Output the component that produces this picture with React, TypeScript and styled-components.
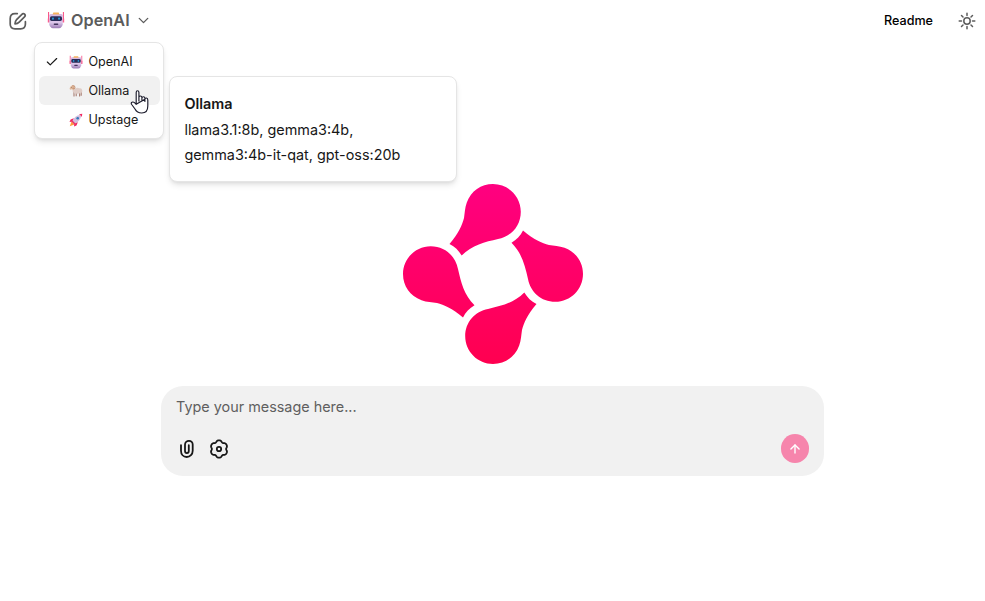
import React from "react";
import styled, { createGlobalStyle } from "styled-components";
import { ArrowUp, Check, ChevronDown } from "lucide-react";

const GlobalStyle = createGlobalStyle`
  *, *::before, *::after { box-sizing: border-box; }
  html, body, #root { height: 100%; }
  body {
    margin: 0;
    background: #fff;
    color: #171717;
    font-family: Inter, "Liberation Sans", sans-serif;
    overflow: hidden;
  }
  button { font: inherit; border: 0; padding: 0; background: none; }
`;

const Page = styled.div`
  position: relative;
  display: flex;
  flex-direction: column;
  height: 100%;
`;

const Header = styled.header`
  display: flex;
  align-items: center;
  height: 41px;
  padding: 0 9px 0 8px;
`;

const IconButton = styled.button<{ $size: number; $color?: string }>`
  display: grid;
  place-items: center;
  width: ${(p) => p.$size}px;
  height: ${(p) => p.$size}px;
  color: ${(p) => p.$color ?? "#171717"};
  svg { display: block; }
`;

const ProfileButton = styled.button`
  display: flex;
  align-items: center;
  margin: 0 0 2px 19px;
  color: #5c5c5c;
  font-size: 16.2px;
  line-height: 24px;
  font-weight: 600;
`;

const ProfileName = styled.span`
  margin: 0 5px 0 6px;
  letter-spacing: 0.08px;
`;

const ChevronSlot = styled.span`
  display: flex;
  padding-top: 2px;
`;

const Spacer = styled.div`
  flex: 1;
`;

const ReadmeLink = styled.button`
  margin-right: 25px;
  color: #000;
  font-size: 12.6px;
  font-weight: 500;
  line-height: 18px;
`;

const Menu = styled.div`
  position: absolute;
  left: 34px;
  top: 42px;
  width: 130px;
  padding: 4px 3px 4px 4px;
  border: 1px solid #e5e5e5;
  border-radius: 8px;
  background: #fff;
  box-shadow: 0 4px 6px -1px rgba(0, 0, 0, 0.1), 0 2px 4px -2px rgba(0, 0, 0, 0.1);
`;

const MenuItem = styled.div<{ $active?: boolean }>`
  display: grid;
  grid-template-columns: 30px 19.4px 1fr;
  align-items: center;
  height: 29px;
  border-radius: 6px;
  background: ${(p) => (p.$active ? "#f1f1f1" : "transparent")};
  font-size: 12.6px;
  line-height: 18px;
`;

const CheckSlot = styled.span`
  display: flex;
  padding-left: 6px;
`;

const HoverCard = styled.section`
  position: absolute;
  left: 169px;
  top: 76px;
  width: 288px;
  height: 106px;
  padding: 14.4px;
  border: 1px solid #e5e5e5;
  border-radius: 8px;
  background: #fff;
  box-shadow: 0 4px 6px -1px rgba(0, 0, 0, 0.1), 0 2px 4px -2px rgba(0, 0, 0, 0.1);
  font-size: 14.4px;
  line-height: 25.2px;
`;

const CardTitle = styled.div`
  font-weight: 600;
  margin-bottom: 0.6px;
`;

const CursorLayer = styled.div`
  position: absolute;
  left: 130px;
  top: 89px;
  pointer-events: none;
`;

const Main = styled.main`
  display: flex;
  flex-direction: column;
  align-items: center;
  padding-top: 143px;
`;

const Composer = styled.form`
  display: flex;
  flex-direction: column;
  justify-content: space-between;
  width: 663px;
  height: 90px;
  margin-top: 22px;
  padding: 9px 15px 13px 15px;
  border-radius: 22px;
  background: #f1f1f1;
`;

const Placeholder = styled.div`
  color: #5f5f5f;
  font-size: 14.4px;
  line-height: 24px;
`;

const ComposerActions = styled.div`
  display: flex;
  align-items: center;
  gap: 10px;
`;

const SendButton = styled.button`
  display: grid;
  place-items: center;
  width: 28.4px;
  height: 29px;
  margin-left: auto;
  border-radius: 50%;
  background: #f685ac;
  color: #fff;
`;

const PETAL =
  "M46.5 60 C56 49 59 41 61 34 C61.8 29 61.8 24 63.8 18.500 C68 7 78 0 90 0 C105.300 0 117.800 12.400 117.800 27.700 C117.800 42 108 52.500 95 55 C82 58 69 61 58.700 71.500 C55.500 66.500 52 62.500 46.500 60Z";

const Logo = () => (
  <svg width="180" height="180" viewBox="0 0 180 180" display="block">
    <defs>
      <linearGradient id="logoFill" x1="0" y1="0" x2="0" y2="1">
        <stop offset="0" stopColor="#ff0080" />
        <stop offset="1" stopColor="#ff0050" />
      </linearGradient>
      <clipPath id="petals">
        {[0, 90, 180, 270].map((angle) => (
          <path key={angle} d={PETAL} transform={`rotate(${angle} 90 90)`} />
        ))}
      </clipPath>
    </defs>
    <rect width="180" height="180" fill="url(#logoFill)" clipPath="url(#petals)" />
  </svg>
);

const EditIcon = () => (
  <svg width="20" height="20" viewBox="0 0 20 20" fill="none" stroke="currentColor" strokeWidth="1.7" strokeLinecap="round" strokeLinejoin="round">
    <path d="M9.300 2.600H7C3.800 2.600 2.200 4.200 2.200 7.400v5.600c0 3.200 1.600 4.800 4.800 4.800h5.600c3.200 0 4.800-1.600 4.800-4.800v-2.300" />
    <path d="M7 12.900c.1-2.100.4-3.100 1.600-4.300l5.300-5.300c.8-.8 1.900-.9 2.700-.1s.7 1.900-.1 2.700l-5.300 5.300C10 12.400 9 12.800 7 12.900Z" />
  </svg>
);

const SunIcon = () => (
  <svg width="18" height="18" viewBox="0 0 18 18" fill="none" stroke="currentColor" strokeWidth="1.5" strokeLinecap="round">
    <circle cx="9" cy="9" r="3.200" />
    <path d="M9 1.200v2.300M9 14.500v2.300M1.200 9h2.300M14.500 9h2.300M3.500 3.500l1.500 1.500M13 13l1.500 1.500M14.500 3.500 13 5M5 13l-1.500 1.500" />
  </svg>
);

const PaperclipIcon = () => (
  <svg width="20" height="20" viewBox="0 0 20 20" fill="none" stroke="currentColor" strokeWidth="1.8" strokeLinecap="round">
    <path d="M4 6.200v5.600c0 3.500 2.300 6.200 5.700 6.200s6-2.700 6-6.200V5.500c0-2.200-1.500-3.600-3.700-3.600S8 3.500 8 5.700v6.400c0 1.200.8 2 1.900 2s1.900-.8 1.900-2V6.200" />
  </svg>
);

const gearOutline = Array.from({ length: 120 }, (_, i) => {
  const angle = (i * Math.PI) / 60;
  const notch = Math.pow(Math.abs(Math.sin(3 * angle)), 3.5);
  const radius = 8.6 - 1.5 * notch;
  return `${(10 + radius * Math.sin(angle)).toFixed(2)},${(10 - radius * Math.cos(angle)).toFixed(2)}`;
}).join(" ");

const GearIcon = () => (
  <svg width="20" height="20" viewBox="0 0 20 20" fill="none" stroke="currentColor" strokeWidth="1.8" strokeLinejoin="round">
    <polygon points={gearOutline} />
    <circle cx="10" cy="10" r="2.200" />
  </svg>
);

const Robot = ({ size }: { size: number }) => (
  <svg width={size} height={size} viewBox="0 0 18 18" display="block">
    <defs>
      <linearGradient id="face" x1="0" y1="0" x2="0" y2="1">
        <stop offset="0" stopColor="#d5b5df" />
        <stop offset=".6" stopColor="#dcc6ea" />
        <stop offset="1" stopColor="#9c7cb5" />
      </linearGradient>
    </defs>
    <path d="M1.600 1v10M16.400 1v10" stroke="#f8316d" strokeWidth=".9" />
    <path d="M.8 7.500h2v4h-2zM15.200 7.500h2v4h-2z" fill="#f7608f" />
    <path d="M2.300 4.200Q2.600 2.900 4 2.900h10q1.400 0 1.700 1.300v9.200q-.8 3.300-3.600 3.800H5.900q-2.800-.5-3.600-3.800z" fill="url(#face)" />
    <path d="M6.300 1.500h5.400l.7 2H5.600z" fill="#f6b25d" />
    <rect x="3" y="5.200" width="12" height="4.700" rx="1.600" fill="#282c58" />
    <rect x="5" y="6.500" width="1.900" height="2.200" rx=".8" fill="#2a9bd5" />
    <rect x="11.100" y="6.500" width="1.900" height="2.200" rx=".8" fill="#2a9bd5" />
    <rect x="6.700" y="12.400" width="4.600" height="1.600" rx=".7" fill="#43345c" />
  </svg>
);

const Ram = () => (
  <svg width="14" height="14" viewBox="0 0 14 14" display="block">
    <path d="M5 8v4.500M7.200 8.500v3.800M10.600 8v4.500M12.200 8v3.800" stroke="#a77b70" strokeWidth="1.100" />
    <path d="M4 5q1.200-1.400 3-.7 1.700-.9 3.200 0 2-.4 2.800 1.200 1 2-.5 3.200-1 1.300-2.500.6-1.500 1-2.800.1-2 .8-2.700-.8Q2.700 7 4 5" fill="#dfcdc7" />
    <path d="M.6 4.300Q1.800 1 4.500 1.400 6.200 2.500 5.500 4.900 4.200 6.500 3 5.300L1 5.700z" fill="#e1b99c" />
    <path d="M3.200 1.800q2.900-.7 2.800 1.500-.2 1.800-1.700 1.500-1-.5-.2-1.300" fill="none" stroke="#b98261" strokeWidth=".8" />
    <circle cx="2.300" cy="3.600" r=".4" fill="#49343b" />
  </svg>
);

const Rocket = () => (
  <svg width="14" height="14" viewBox="0 0 14 14" display="block">
    <path d="M.8 13.200 2.500 8.600l2.900 2.900z" fill="#ff9d3d" />
    <path d="M4.800 5.200 1.600 6.500.5 9l3.600-.5zM8.800 9.200l-1.300 3.200L5 13.500l.4-3.700z" fill="#f12862" />
    <path d="M3.200 8.300Q6 2.300 11 2l1 1q-.3 5-6.300 7.800z" fill="#d0bddf" />
    <path d="M10 1.200 13.300.7 12.800 4Q11.900 2.200 10 1.200z" fill="#f12862" />
    <path d="m3.500 7.600 2.900 2.900-.9 1.200-3.200-3.200z" fill="#e83769" />
    <circle cx="8.700" cy="5.300" r="1.300" fill="#3279b9" />
  </svg>
);

const HandCursor = () => (
  <svg width="20" height="26" viewBox="0 0 20 26" display="block">
    <path
      d="M6.200 14.800V3.400Q6.200 1.700 7.500 1.700T8.900 3.400V12M8.900 8.500Q9 7 10.400 7T11.900 8.500V12M11.900 9.200Q12 7.700 13.400 7.700T14.900 9.200V12.500M14.900 10.200Q15 8.900 16.400 9Q17.800 9.200 17.800 10.900V17Q17.800 24 11.800 24Q7 24 5 20L1.700 15.500Q.7 14 1.900 13.300Q3.100 12.500 4.500 13.600L6.200 15.300Z"
      fill="#fff"
      stroke="#1c1c2c"
      strokeWidth="1.150"
      strokeLinejoin="round"
      strokeLinecap="round"
    />
  </svg>
);

const profiles = [
  { name: "OpenAI", icon: <Robot size={14} />, selected: true, active: false },
  { name: "Ollama", icon: <Ram />, selected: false, active: true },
  { name: "Upstage", icon: <Rocket />, selected: false, active: false },
];

export default function App() {
  return (
    <>
      <GlobalStyle />
      <Page>
        <Header>
          <IconButton $size={20} $color="#5c5c5c" aria-label="New chat">
            <EditIcon />
          </IconButton>
          <ProfileButton>
            <Robot size={18} />
            <ProfileName>OpenAI</ProfileName>
            <ChevronSlot>
              <ChevronDown size={17} strokeWidth={1.9} />
            </ChevronSlot>
          </ProfileButton>
          <Spacer />
          <ReadmeLink>Readme</ReadmeLink>
          <IconButton $size={18} $color="#5c5c5c" aria-label="Theme">
            <SunIcon />
          </IconButton>
        </Header>
        <Main>
          <Logo />
          <Composer>
            <Placeholder>Type your message here...</Placeholder>
            <ComposerActions>
              <IconButton $size={22} type="button" aria-label="Attach">
                <PaperclipIcon />
              </IconButton>
              <IconButton $size={22} type="button" aria-label="Settings">
                <GearIcon />
              </IconButton>
              <SendButton type="button" aria-label="Send">
                <ArrowUp size={14} strokeWidth={2.4} />
              </SendButton>
            </ComposerActions>
          </Composer>
        </Main>
        <Menu>
          {profiles.map((p) => (
            <MenuItem key={p.name} $active={p.active}>
              <CheckSlot>{p.selected && <Check size={14} />}</CheckSlot>
              {p.icon}
              <span>{p.name}</span>
            </MenuItem>
          ))}
        </Menu>
        <HoverCard>
          <CardTitle>Ollama</CardTitle>
          <div>llama3.1:8b, gemma3:4b, gemma3:4b-it-qat, gpt-oss:20b</div>
        </HoverCard>
        <CursorLayer>
          <HandCursor />
        </CursorLayer>
      </Page>
    </>
  );
}
